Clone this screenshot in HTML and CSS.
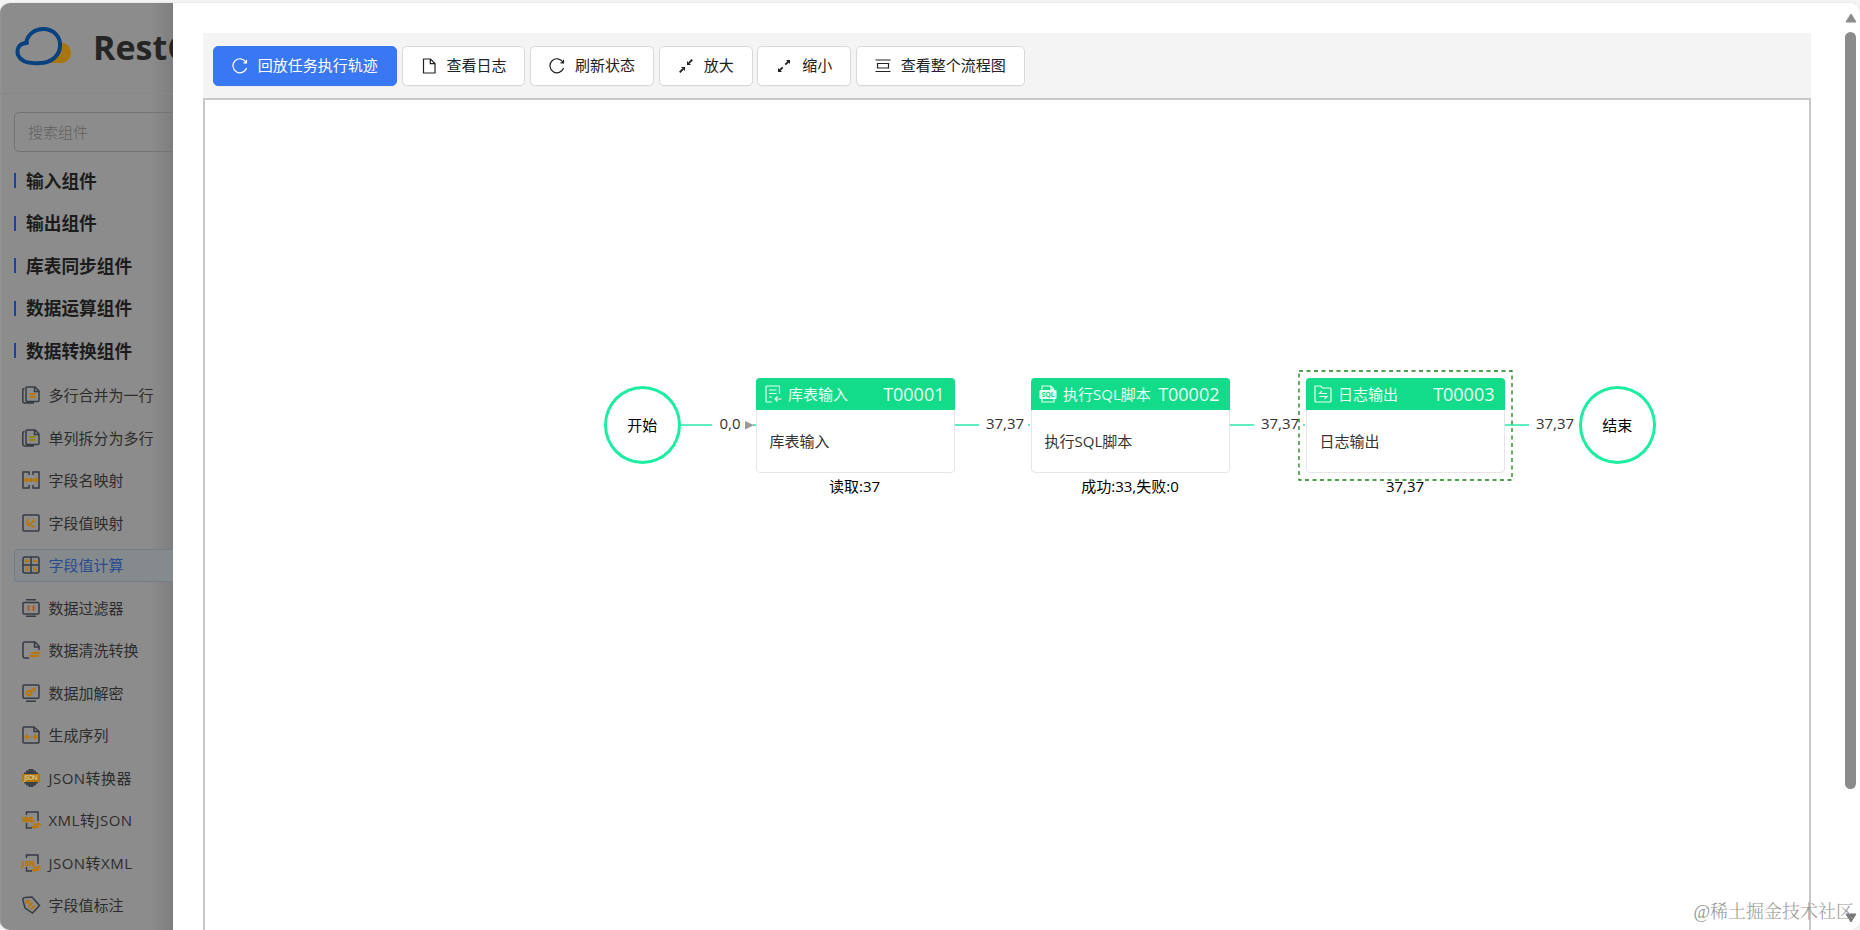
FILE: index.html
```html
<!DOCTYPE html>
<html lang="zh-CN">
<head>
<meta charset="utf-8">
<title>RestCloud</title>
<link rel="stylesheet" href="styles.css">
</head>
<body>
<div class="app">
  <aside class="sidebar">
    <div class="brand">
      <svg class="brand-logo" width="60" height="42" viewBox="0 0 60 42"><path d="M34 37h14c10-1 12-14 4-19-2-1-4-2-7-2z" fill="#a8760f"/><path d="M12 17C14 7 22 3 29 3c11 0 18 8 17 18-1 9-9 16-20 16-11 1-19-1-22-8-2-7 2-12 9-12z" fill="#8c8c8c" stroke="#07417f" stroke-width="4" stroke-linejoin="round"/></svg>
      <span class="brand-name">RestCloud</span>
    </div>
    <div class="search">搜索组件</div>
    <div class="group">输入组件</div>
    <div class="group">输出组件</div>
    <div class="group">库表同步组件</div>
    <div class="group">数据运算组件</div>
    <div class="group">数据转换组件</div>
    <div class="items">
      <div class="item"><svg class="ico" viewBox="0 0 18 18"><path d="M5 1h8l4 4v9.500q0 1-1 1H5q-1 0-1-1V2q0-1 1-1zM12.500 1.500V5.500H17M2.500 2.500q-1.700 0-1.700 2V15q0 2 2 2H12"/><path class="o" d="M7.500 8h6M7.500 11h6"/></svg><span>多行合并为一行</span></div>
      <div class="item"><svg class="ico" viewBox="0 0 18 18"><path d="M5 1h8l4 4v9.500q0 1-1 1H5q-1 0-1-1V2q0-1 1-1zM12.500 1.500V5.500H17M2.500 2.500q-1.700 0-1.700 2V15q0 2 2 2H12"/><path class="y" d="M7.500 8h6M7.500 11h6"/></svg><span>单列拆分为多行</span></div>
      <div class="item"><svg class="ico" viewBox="0 0 18 18"><path d="M7 4V1H1v16h6v-3M11 4V1h6v16h-6v-3"/><path class="o" d="M3 9h12M5 7L3 9l2 2M13 7l2 2-2 2M9 7v4"/></svg><span>字段名映射</span></div>
      <div class="item"><svg class="ico" viewBox="0 0 18 18"><rect x="1" y="1" width="16" height="16" rx="1"/><path class="o w" d="M5.500 5v7M7 11.500l5.500-6M9 12.500h4"/></svg><span>字段值映射</span></div>
      <div class="item active"><svg class="ico" viewBox="0 0 18 18"><rect x="1" y="1" width="16" height="16" rx="2"/><path d="M9 1v16M1 9h16"/><path class="o" d="M3 5h4M5 3v4M11.500 5h3.500M3.500 11.500h3M3.500 14h3M11.500 11.500l3.500 3.500"/></svg><span>字段值计算</span></div>
      <div class="item"><svg class="ico" viewBox="0 0 18 18"><rect x="1" y="3.500" width="16" height="11.500" rx="1"/><path d="M4 .8h10M4 17.200h10"/><path class="r" d="M6.500 6.500v5.500M11.500 6.500v5.500"/></svg><span>数据过滤器</span></div>
      <div class="item"><svg class="ico" viewBox="0 0 18 18"><path d="M7 17H3q-2 0-2-2V3q0-2 2-2h10l4 4v4M12.500 1.500V6H17"/><path class="o" d="M9 12h8l-2-1.500M17 15H9l2 1.500"/></svg><span>数据清洗转换</span></div>
      <div class="item"><svg class="ico" viewBox="0 0 18 18"><rect x="1" y="1" width="16" height="13.200" rx="1"/><path d="M4 17.200h10"/><circle class="o w" cx="7" cy="9" r="2.200"/><path class="o w" d="M8.500 7.500L13 4M11 5.500l1.500 1.500"/></svg><span>数据加解密</span></div>
      <div class="item"><svg class="ico" viewBox="0 0 18 18"><path d="M2 1h10l5 4.500V16q0 1-1 1H2q-1 0-1-1V2q0-1 1-1zM12 1.500V5.500h5"/><path class="o" d="M5.500 9L3.500 11l2 2M12.500 9l2 2-2 2M3.500 11H7M11 11h3.500M8.500 11h1"/></svg><span>生成序列</span></div>
      <div class="item latin"><svg class="ico" viewBox="0 0 18 18"><path class="fill" d="M6.500 0h5v1.500H14v2h2V5H2V3.500h2v-2h2.500zM6.500 18h5v-1.500H14v-2h2V13H2v1.500h2v2h2.500z"/><path class="of" d="M0 5h18v8H0z"/><text class="t l" x="9" y="11.300" textLength="14">JSON</text></svg><span>JSON转换器</span></div>
      <div class="item latin"><svg class="ico" viewBox="0 0 18 18"><path d="M4.500 4V1H16v9M4.500 12v5H10"/><path class="o" d="M11 13.500h6.500L15.500 12M17 16h-6l2 1.500"/><text class="t" x="6.500" y="10.500" textLength="13">XML</text></svg><span>XML转JSON</span></div>
      <div class="item latin"><svg class="ico" viewBox="0 0 18 18"><path d="M4.500 4V1H16v9M4.500 13v4H10"/><path class="o" d="M11 13.500h6.500L15.500 12M17 16h-6l2 1.500"/><text class="t" x="6.500" y="11.500" textLength="13">JSN</text></svg><span>JSON转XML</span></div>
      <div class="item"><svg class="ico" viewBox="0 0 18 18"><path d="M.8 3.500Q1 1.500 3 1.500L10 1l7.500 8.500L10.500 17 3 12z"/><circle class="o" cx="5.700" cy="5.700" r="1.400"/><path class="o" d="M6 11l4.500-4.500M9 13.300l4-4"/></svg><span>字段值标注</span></div>
    </div>
  </aside>
  <main class="drawer">
    <div class="panel">
      <div class="toolbar">
        <button class="btn primary"><svg class="bi" viewBox="0 0 16 16"><path d="M14 4.200A7 7 0 1 0 14.600 10M14.500 1.800v3h-3"/></svg><span>回放任务执行轨迹</span></button>
        <button class="btn"><svg class="bi" viewBox="0 0 16 16"><path d="M2.500 1h7l4.500 4.500V15H2.500zM9.300 1v4.700H14"/></svg><span>查看日志</span></button>
        <button class="btn"><svg class="bi" viewBox="0 0 16 16"><path d="M14 4.200A7 7 0 1 0 14.600 10M14.500 1.800v3h-3"/></svg><span>刷新状态</span></button>
        <button class="btn"><svg class="bi" viewBox="0 0 16 16"><path class="bw" d="M14.300 1.700L11 5M1.700 14.300L5 11"/><path class="bf" d="M9 7V3L13 7zM7 9v4L3 9z"/></svg><span>放大</span></button>
        <button class="btn"><svg class="bi" viewBox="0 0 16 16"><path class="bw" d="M12.500 3.500L9.300 6.700M3.500 12.500l3.200-3.200"/><path class="bf" d="M10 2h4v4zM6 14H2v-4z"/></svg><span>缩小</span></button>
        <button class="btn"><svg class="bi" viewBox="0 0 16 16"><path d="M.5 2h15M.5 13.500h15M2.500 5.500h11v4.500h-11z"/></svg><span>查看整个流程图</span></button>
      </div>
      <div class="canvas">
        <svg class="links" width="1604" height="830" viewBox="205 100 1604 830">
          <path d="M681 425h31M753 425h3M955 425h24M1028 425h2M1230 425h24M1303 425h2M1505 425h24" stroke="#5eedbb" stroke-width="2"/>
          <path d="M745 421v8.500l9-4.200z" fill="#999"/>
        </svg>
        <div class="terminal start">开始</div>
        <div class="terminal end">结束</div>

        <div class="node n1"><div class="node-head"><svg class="ni" viewBox="0 0 18 18"><path d="M15.500 9V2q0-1-1-1H3Q2 1 2 2v14q0 1 1 1h5M5 5h7.500M5 8.500h7.500M5 12h3M17.500 14H11M13.500 11.500L11 14l2.500 2.500"/></svg><span>库表输入</span><b>T00001</b></div><div class="node-body">库表输入</div></div>
        <div class="node n2"><div class="node-head"><svg class="ni" viewBox="0 0 18 18"><path d="M3 4.500V1h9l3 3.500M3 14v3h12v-3M12 1v3.500h3"/><rect x=".5" y="5" width="17" height="9" rx="1" fill="#e9fff6" stroke="none"/><text class="sql" x="9" y="12" textLength="13">SQL</text></svg><span>执行SQL脚本</span><b>T00002</b></div><div class="node-body">执行SQL脚本</div></div>
        <div class="node n3"><div class="node-head"><svg class="ni" viewBox="0 0 18 18"><path d="M1 1h5.500l2 2H16q1 0 1 1v12q0 1-1 1H2q-1 0-1-1zM13 8.500H5.500L8 6M5.500 11.500H13L10.500 14"/></svg><span>日志输出</span><b>T00003</b></div><div class="node-body">日志输出</div></div>
        <svg class="selection" width="216" height="112" viewBox="0 0 216 112"><rect x="1" y="1" width="213" height="109"/></svg>

        <span class="label l1">0,0</span>
        <span class="label l2">37,37</span>
        <span class="label l3">37,37</span>
        <span class="label l4">37,37</span>
        <span class="label stat s1">读取:37</span>
        <span class="label stat s2">成功:33,失败:0</span>
        <span class="label stat s3">37,37</span>
      </div>
    </div>
    <div class="scrollbar">
      <svg width="12" height="10" viewBox="0 0 12 10"><path d="M6 1L11 9H1z" fill="#8b8b8b" stroke="#8b8b8b" stroke-linejoin="round"/></svg>
      <div class="thumb"></div>
      <svg class="down" width="12" height="10" viewBox="0 0 12 10"><path d="M6 9L11 1H1z" fill="#777" stroke="#777" stroke-linejoin="round"/></svg>
    </div>
  </main>
  <div class="watermark">@稀土掘金技术社区</div>
</div>
</body>
</html>
```
FILE: styles.css
```css
* { box-sizing: border-box; }
body {
  margin: 0;
  height: 930px;
  overflow: hidden;
  background: #f4f4f4;
  padding-top: 3px;
  font: 15px/20px "Open Sans", "Noto Sans CJK SC", sans-serif;
  color: #333;
}
.app {
  position: relative;
  display: flex;
  height: 927px;
  border-radius: 10px;
  overflow: hidden;
  background: #fff;
  box-shadow: 0 0 2px #ccc;
}
.sidebar {
  flex: none;
  width: 173px;
  overflow: hidden;
  background: linear-gradient(90deg, #8c8c8c 0 150px, #7e7e7e 173px);
  box-shadow: inset 2px 0 #919191;
}
.brand {
  display: flex;
  height: 91px;
  padding: 23px 0 0 14px;
  border-bottom: 1px solid #888;
}
.brand-logo { flex: none; }
.brand-name {
  margin: -1px 0 0 19px;
  font: bold 34px/44px "Open Sans", sans-serif;
  color: #252525;
}
.search {
  width: 220px;
  height: 40px;
  margin: 18px 0 7.500px 14px;
  padding: 0 13px;
  border: 1px solid #747474;
  border-radius: 5px;
  line-height: 38px;
  font-weight: 300;
  color: #606060;
}
.group {
  display: flex;
  align-items: center;
  height: 42.500px;
  margin-left: 14px;
  font-size: 17.700px;
  font-weight: bold;
  white-space: nowrap;
  color: #1c1c1c;
}
.group::before {
  content: "";
  width: 2px;
  height: 15px;
  margin-right: 10px;
  background: #164697;
}
.items { padding: 6.500px 0 0 14px; }
.item {
  display: flex;
  align-items: center;
  width: 220px;
  height: 33px;
  margin-bottom: 9.500px;
  padding-left: 7px;
  border: 1px solid transparent;
  border-radius: 3px;
  white-space: nowrap;
  color: #2c2c2c;
}
.item.latin span { letter-spacing: .5px; }
.item.active {
  background: #858a8c;
  border-color: #737d88;
  color: #294b92;
}
.ico {
  flex: none;
  width: 18px;
  height: 18px;
  margin-right: 8.400px;
  fill: none;
  stroke: #363a42;
  stroke-width: 1.5;
  overflow: visible;
}
.ico .o { stroke: #bc7606; stroke-width: 1.8; }
.ico .y { stroke: #948410; stroke-width: 1.8; }
.ico .r { stroke: #ad5518; stroke-width: 1.8; }
.ico .w { stroke-width: 2.1; }
.ico .fill { fill: #3c4047; stroke: none; }
.ico .of { fill: #b4780b; stroke: none; }
.ico .t {
  font: bold 7px "Open Sans", sans-serif;
  text-anchor: middle;
  fill: #bc7606;
  stroke: #bc7606;
  stroke-width: .5;
}
.ico .l { fill: #d0bb88; stroke: none; }
.drawer {
  display: flex;
  flex: 1;
  min-width: 0;
  background: #fff;
}
.panel {
  display: flex;
  flex-direction: column;
  width: 1608px;
  margin: 30px 0 0 30px;
}
.toolbar {
  display: flex;
  gap: 4.800px;
  height: 65px;
  padding: 13px 10px;
  background: #f4f4f4;
}
.btn {
  display: flex;
  align-items: center;
  height: 40px;
  padding: 0 18px;
  border: 1px solid #d9d9d9;
  border-radius: 5px;
  background: #fff;
  box-shadow: 0 1px 1px #00000008;
  font: inherit;
  white-space: nowrap;
  color: #222;
}
.btn span { margin-top: -2px; }
.btn.primary {
  background: #3a77f3;
  border-color: #3a77f3;
  color: #fff;
}
.bi {
  width: 16px;
  height: 16px;
  margin-right: 9.800px;
  fill: none;
  stroke: currentColor;
  stroke-width: 1.2;
}
.bi .bf { fill: currentColor; stroke: none; }
.bi .bw { stroke-width: 1.8; }
.canvas {
  position: relative;
  flex: 1;
  border: 2px solid #c8c8c8;
  border-bottom: 0;
  background: #fff;
}
.links { position: absolute; left: 0; top: 0; }
.terminal {
  position: absolute;
  top: 286px;
  display: flex;
  align-items: center;
  justify-content: center;
  width: 77.500px;
  height: 78px;
  border: 3px solid #1beda1;
  border-radius: 50%;
  background: #fff;
  color: #000;
}
.start { left: 398.500px; }
.end { left: 1373.500px; }
.node {
  position: absolute;
  top: 278px;
  width: 199px;
  height: 95px;
  border: 1px solid #e6e6e6;
  border-radius: 4px;
  background: #fff;
}
.n1 { left: 550.500px; }
.n2 { left: 825.500px; }
.n3 { left: 1100.500px; }
.node-head {
  display: flex;
  align-items: center;
  height: 32px;
  margin: -1px -1px 0;
  padding: 0 10px 0 8px;
  border-radius: 4px 4px 0 0;
  background: #12db89;
  color: #e9fff6;
  white-space: nowrap;
}
.node-head span, .node-head b { margin-top: -1px; }
.ni {
  flex: none;
  width: 18px;
  height: 18px;
  margin-right: 6.500px;
  fill: none;
  stroke: #e9fff6;
  stroke-width: 1.2;
}
.sql {
  font: bold 7px "Open Sans", sans-serif;
  text-anchor: middle;
  fill: #12db89;
  stroke: none;
}
.node-head b {
  margin-left: auto;
  font-size: 18px;
  font-weight: 400;
}
.node-body { padding: 21px 13px; }
.selection {
  position: absolute;
  left: 1092.500px;
  top: 269.500px;
  fill: none;
  stroke: #148014;
  stroke-width: 1.3;
  stroke-dasharray: 4 3.500;
}
.label {
  position: absolute;
  top: 313px;
  transform: translateX(-50%);
  white-space: nowrap;
}
.l1 { left: 525px; }
.l2 { left: 800px; }
.l3 { left: 1075px; }
.l4 { left: 1350px; }
.stat { top: 376px; color: #000; }
.s1 { left: 649.500px; }
.s2 { left: 925px; }
.s3 { left: 1200px; }
.scrollbar {
  display: flex;
  flex-direction: column;
  align-items: center;
  width: 15px;
  margin: 10px 2px 7px auto;
}
.scrollbar svg { flex: none; }
.thumb {
  width: 11px;
  height: 757px;
  margin-top: 9px;
  border-radius: 6px;
  background: #8b8b8b;
}
.down { margin-top: auto; }
.watermark {
  position: absolute;
  right: 6px;
  bottom: 4px;
  font: 300 18px/28px "Liberation Serif", "Noto Serif CJK SC", "Noto Sans CJK SC", serif;
  color: #999;
}
```
